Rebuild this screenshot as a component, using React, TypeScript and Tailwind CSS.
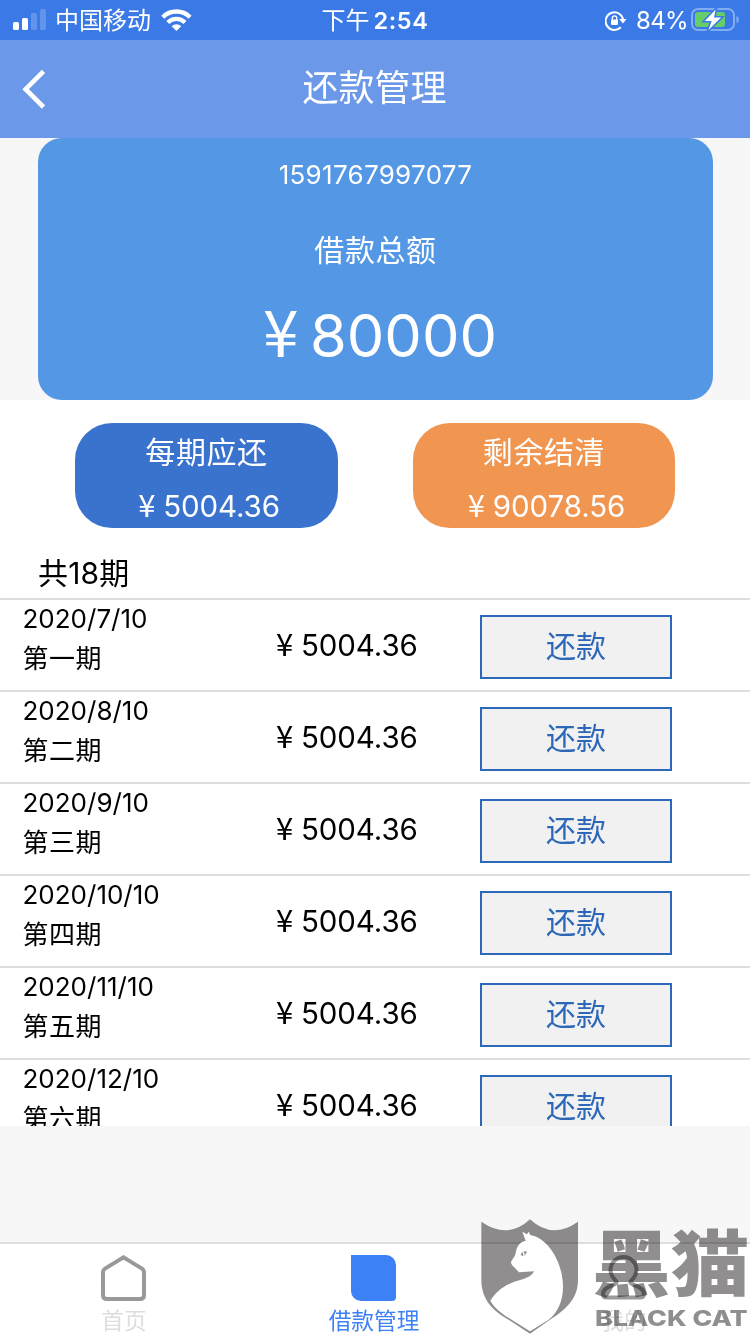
import React from "react";

const rows = [
  { date: "2020/7/10", term: "第一期" },
  { date: "2020/8/10", term: "第二期" },
  { date: "2020/9/10", term: "第三期" },
  { date: "2020/10/10", term: "第四期" },
  { date: "2020/11/10", term: "第五期" },
  { date: "2020/12/10", term: "第六期" },
];

function Amount({ value }: { value: string }) {
  return (
    <div className="flex text-[29.5px] leading-[40px]">
      <span className="-mt-[2px] w-[25px] text-[31px] font-['Noto_Sans_CJK_SC']">¥</span>
      <span className="tracking-[-0.1px]">{value}</span>
    </div>
  );
}

function StatusBar() {
  return (
    <div className="flex h-[40px] shrink-0 items-center bg-[#3b7ae6] text-[24px] leading-[40px] text-white">
      <div className="flex w-[250px] items-center">
        <svg className="ml-[13px] h-[40px] w-[34px]" viewBox="0 0 34 40" fill="#fff">
          <rect x="0" y="22" width="6" height="8" rx="1.6" />
          <rect x="9" y="18" width="6" height="12" rx="1.6" />
          <rect x="18" y="13" width="6" height="17" rx="1.6" opacity=".2" />
          <rect x="27" y="9" width="6" height="21" rx="1.6" opacity=".2" />
        </svg>
        <span className="mt-[2px] ml-[8px] w-[96px]">中国移动</span>
        <svg className="ml-[10px] h-[40px] w-[31px]" viewBox="0 0 31 40" fill="none" stroke="#fff">
          <path d="M1.8 17.3a19 19 0 0 1 27.2 0" strokeWidth="4.4" />
          <path d="M6.8 22.5a12 12 0 0 1 17.2 0" strokeWidth="4.2" />
          <path d="M15.4 31L10.6 26.3a6.8 6.8 0 0 1 9.6 0z" fill="#fff" stroke="none" />
        </svg>
      </div>
      <div className="mt-[2px] flex w-[250px] justify-center">
        <span className="w-[49px]">下午</span>
        <span className="ml-[3px] text-[23.5px] font-semibold tracking-[0.6px]">2:54</span>
      </div>
      <div className="flex w-[250px] items-center">
        <svg className="ml-[105px] h-[40px] w-[22px]" viewBox="0 0 22 40" fill="none">
          <path d="M15.8 27.2a8.8 8.8 0 1 1 2.4-6.8" stroke="#fff" strokeWidth="2" />
          <path d="M14.2 19h7.3l-3.6 4.6z" fill="#fff" />
          <rect x="6" y="19.6" width="7" height="5.4" rx="1" fill="#fff" />
          <path d="M7.3 20v-2a2.2 2.2 0 0 1 4.4 0v2" stroke="#fff" strokeWidth="1.3" />
        </svg>
        <span className="mt-[2px] ml-[9px] w-[51px] text-[24px] tracking-[-0.7px]">84%</span>
        <svg className="ml-[4px] h-[40px] w-[49px]" viewBox="0 0 49 40" fill="none">
          <rect x="1" y="9" width="42" height="21" rx="6" stroke="#83adf1" strokeWidth="2" />
          <path d="M45.5 16q2.5.8 2.5 3.6t-2.5 3.6z" fill="#83adf1" />
          <rect x="4" y="12" width="30" height="15" rx="3" fill="#67cd68" />
          <path d="M26 7L12 21.800h7.500L15.500 33L32 16.700h-8z" fill="#fff" stroke="#3b7ae6" strokeWidth="1.6" />
        </svg>
      </div>
    </div>
  );
}

function Watermark() {
  return (
    <svg className="absolute right-0 bottom-0 h-[144px] w-[290px]" viewBox="0 0 870 432">
      <path
        className="mix-blend-multiply"
        fill="#918e8f"
        d="M64 95Q144 150 210 88Q276 150 354 95V270C354 320 325 355 270 389L210 431L147 390C100 363 64 330 64 270Z"
      />
      <path
        fill="#fff"
        d="M197 152L187 125L201 133L206 125L211 135C265 145 308 215 309 290C309 335 292 368 265 390L210 424L150 386C123 370 104 354 91 333C108 302 140 280 183 269C203 264 216 257 222 244L176 247C170 235 157 231 153 218C154 209 165 202 167 189C170 169 180 155 197 152Z"
      />
      <path d="M182 193Q188 182 200 184Q200 195 188 199Q184 198 182 193Z" fill="#918e8f" />
      <path d="M189 187Q194 191 190 197" fill="none" stroke="#fff" strokeWidth="4" />
      <g className="mix-blend-multiply" fill="#918e8f">
        <text
          x="396"
          y="300"
          fontSize="216"
          fontWeight="900"
          textLength="472"
          lengthAdjust="spacingAndGlyphs"
          className="font-['Noto_Sans_CJK_SC',sans-serif]"
        >
          黑猫
        </text>
        <text
          x="405"
          y="408"
          fontSize="64"
          fontWeight="800"
          textLength="458"
          lengthAdjust="spacingAndGlyphs"
          className="font-['Inter',sans-serif]"
        >
          BLACK CAT
        </text>
      </g>
    </svg>
  );
}

export default function App() {
  return (
    <div className="relative flex h-[1334px] w-[750px] flex-col overflow-hidden bg-[#f7f7f7] font-['Inter','Noto_Sans_CJK_SC',sans-serif] text-black">
      <StatusBar />
      <header className="flex h-[98px] shrink-0 items-center bg-[#6b98e9] text-white">
        <svg className="ml-[22px] h-[40px] w-[24px]" viewBox="0 0 24 40" fill="none">
          <path d="M21.5 2.3L3.6 20.2L21.5 38" stroke="#fff" strokeWidth="4.6" />
        </svg>
        <h1 className="-mt-[2px] mr-[47px] flex-1 text-center text-[36px] leading-[50px] font-normal">还款管理</h1>
      </header>

      <section className="mx-[38px] flex h-[262px] w-[675px] shrink-0 flex-col items-center rounded-[24px] bg-[#5497e5] text-white">
        <div className="mt-[17px] text-[26px] leading-[40px] tracking-[0.3px]">1591767997077</div>
        <div className="mt-[35px] text-[30px] leading-[40px] tracking-[0.6px]">借款总额</div>
        <div className="mt-[25px] ml-[9px] flex text-[59.5px] leading-[80px] font-[380]">
          <span className="-mt-[6px] w-[47px] text-[64px] font-['Noto_Sans_CJK_SC'] font-normal">¥</span>
          <span>80000</span>
        </div>
      </section>

      <main className="h-[726px] shrink-0 overflow-hidden bg-white">
        <div className="flex h-[128px] pt-[23px] pl-[75px] text-white">
          <div className="flex h-[105px] w-[263px] flex-col items-center rounded-[37px] bg-[#3973ce] pt-[9px]">
            <div className="text-[30px] leading-[40px] tracking-[0.6px]">每期应还</div>
            <div className="mt-[14px] ml-[5px]"><Amount value="5004.36" /></div>
          </div>
          <div className="ml-[75px] flex h-[105px] w-[262px] flex-col items-center rounded-[37px] bg-[#f09651] pt-[9px]">
            <div className="text-[30px] leading-[40px] tracking-[0.6px]">剩余结清</div>
            <div className="mt-[14px] ml-[5px]"><Amount value="90078.56" /></div>
          </div>
        </div>
        <div className="h-[70px] pt-[25px] pl-[38px] text-[30px] leading-[40px] tracking-[0.2px]">共18期</div>
        {rows.map((row) => (
          <div key={row.date} className="flex h-[92px] border-t-2 border-[#ddd]">
            <div className="w-[253px] pl-[22.5px] text-[26px] leading-[40px]">
              <div className="-mt-px">{row.date}</div>
              <div className="tracking-[0.5px]">{row.term}</div>
            </div>
            <div className="w-[227px] pl-[23px] pt-[25px]"><Amount value="5004.36" /></div>
            <button className="mt-[15px] h-[64px] w-[192px] border-2 border-[#2c67b8] bg-[#f1f1f1] pb-[2px] text-[30px] leading-[58px] text-[#2c67b8]">
              还款
            </button>
          </div>
        ))}
      </main>

      <nav className="mt-[116px] flex h-[92px] shrink-0 border-t-2 border-[#ddd] bg-white text-[22.7px] leading-[26px]">
        <div className="flex w-[248px] flex-col items-center pt-[11px] text-[#ddd]">
          <svg className="h-[46px] w-[46px] shrink-0" viewBox="0 0 46 46" fill="none">
            <path d="M4 13.6L22.500 2.400L41 13.6Q43 15 43 17V40Q43 44 39 44H6Q2 44 2 40V17Q2 15 4 13.6Z" stroke="#999" strokeWidth="4" />
          </svg>
          <span className="mt-[7px] shrink-0">首页</span>
        </div>
        <div className="flex w-[252px] flex-col items-center pt-[11px] text-[#3c82f6]">
          <div className="mr-[2px] h-[46px] w-[45px] shrink-0 rounded-tr-[10px] rounded-br-[4px] rounded-bl-[10px] bg-[#3c82f6]" />
          <span className="mt-[7px] shrink-0">借款管理</span>
        </div>
        <div className="flex w-[248px] flex-col items-center pt-[11px] text-[#ddd]">
          <svg className="h-[46px] w-[46px] shrink-0" viewBox="0 0 46 46" fill="none">
            <path
              d="M15 26C11 22 9.5 19 9.5 15A13 13 0 0 1 35.500 15C35.500 19 34 22 30 26C28.500 28 30 28.500 33 30C39 32 43 35 43 39Q43 42.500 39 42.500H6Q2 42.500 2 39C2 35 6 32 12 30C15 28.500 16.500 28 15 26Z"
              stroke="#999"
              strokeWidth="4"
            />
          </svg>
          <span className="mt-[7px] shrink-0">我的</span>
        </div>
      </nav>
      <Watermark />
    </div>
  );
}
